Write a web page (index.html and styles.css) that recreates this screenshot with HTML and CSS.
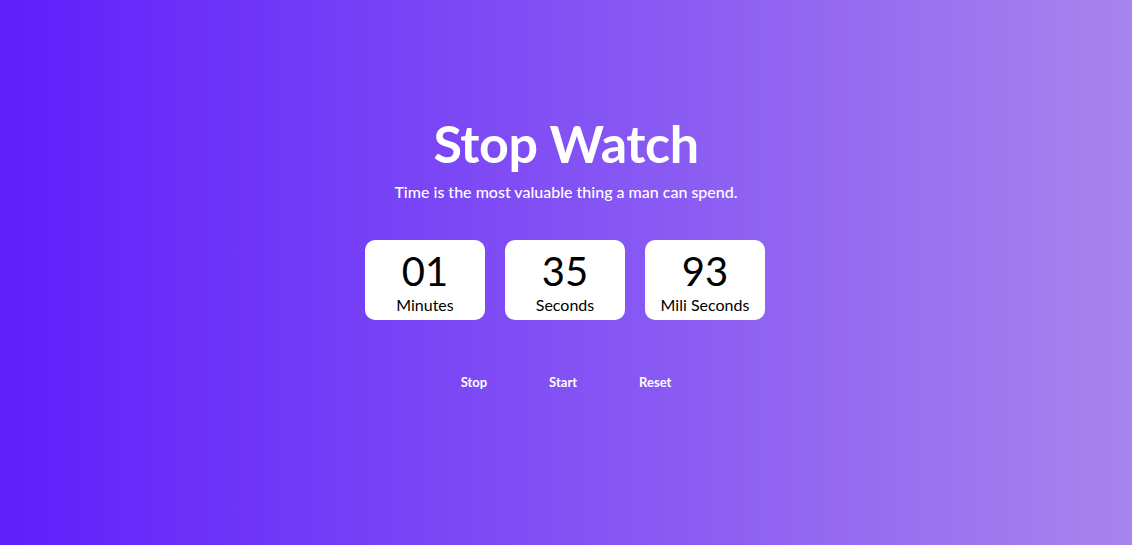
FILE: index.html
```html
<!DOCTYPE html>
<html lang="en">
<head>
<meta charset="utf-8">
<title>Stop Watch</title>
<link rel="stylesheet" href="styles.css">
</head>
<body>
<main class="page">
  <h1 class="title">Stop Watch</h1>
  <p class="subtitle">Time is the most valuable thing a man can spend.</p>
  <div class="timer">
    <div class="unit"><span class="num">01</span><span class="label">Minutes</span></div>
    <div class="unit"><span class="num">35</span><span class="label">Seconds</span></div>
    <div class="unit"><span class="num">93</span><span class="label">Mili Seconds</span></div>
  </div>
  <div class="controls">
    <button class="btn">Stop</button>
    <button class="btn">Start</button>
    <button class="btn">Reset</button>
  </div>
</main>
</body>
</html>
```
FILE: styles.css
```css
* { box-sizing: border-box; }
html, body { margin: 0; height: 100%; }
body {
  font-family: Lato, "Open Sans", sans-serif;
  background: linear-gradient(90deg, #5e1ffb 0%, #a884ed 100%);
  color: #fff;
}
.page {
  height: 545px;
  display: flex;
  flex-direction: column;
  align-items: center;
  padding-top: 110px;
}
.title {
  margin: 0;
  font-size: 52px;
  font-weight: 700;
  line-height: 66px;
  letter-spacing: -0.4px;
}
.subtitle {
  margin: 6px 0 0;
  font-size: 16px;
  line-height: 20px;
  font-weight: 500;
}
.timer {
  display: flex;
  gap: 20px;
  margin-top: 38px;
  margin-right: 2px;
}
.unit {
  width: 120px;
  height: 80px;
  background: #fff;
  border-radius: 10px;
  color: #000;
  display: flex;
  flex-direction: column;
  align-items: center;
  padding-top: 8px;
}
.num {
  font-size: 40px;
  line-height: 46px;
  font-weight: 400;
}
.label {
  font-size: 16px;
  line-height: 20px;
  margin-top: 1px;
}
.controls {
  display: flex;
  gap: 20px;
  margin-top: 54px;
}
.btn {
  background: transparent;
  border: none;
  color: #fff;
  font-family: inherit;
  font-size: 13px;
  font-weight: 700;
  padding: 0 21px;
  line-height: 16px;
  cursor: pointer;
}
```
